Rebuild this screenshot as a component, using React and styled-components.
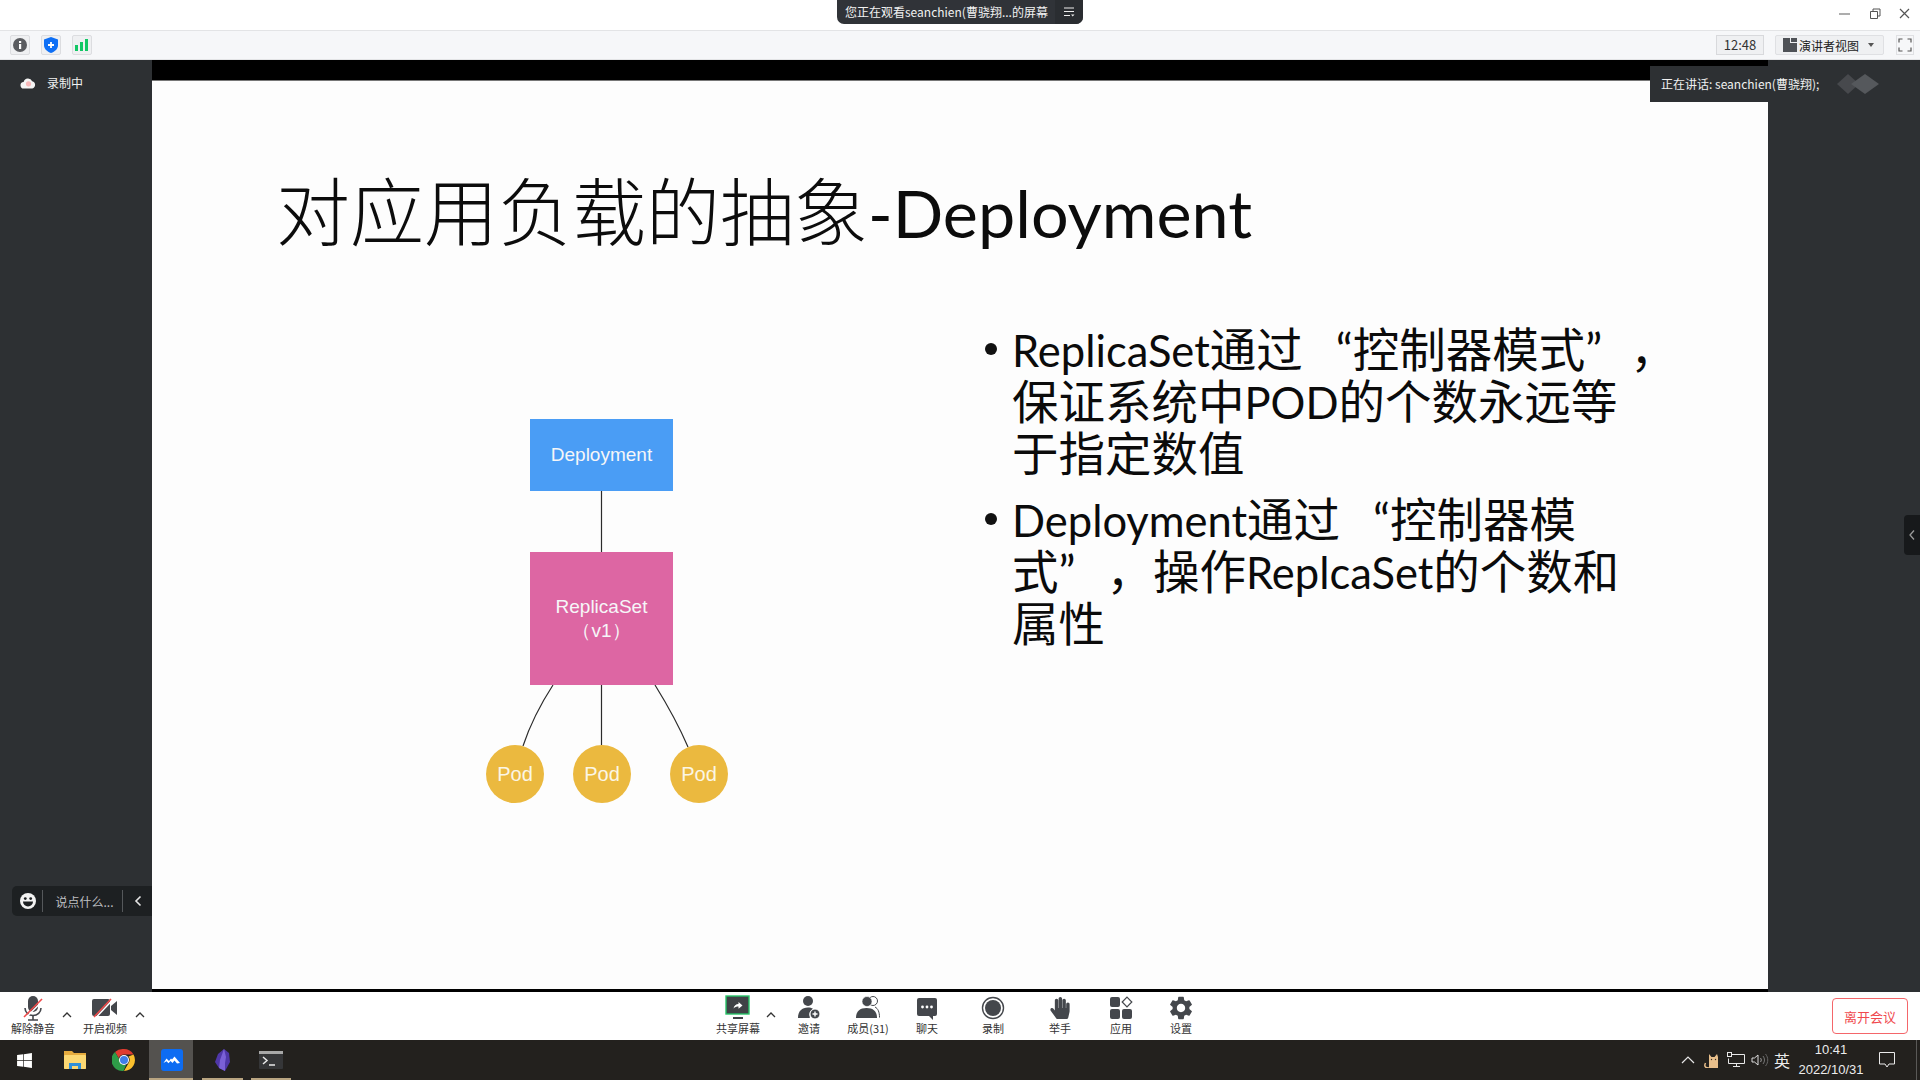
import React from 'react'
import styled, { createGlobalStyle } from 'styled-components'
import { FaHandPaper, FaWindows } from 'react-icons/fa'
import { MdSettings } from 'react-icons/md'

const UI_FONT = `"Noto Sans CJK SC", "Liberation Sans", sans-serif`
const SLIDE_FONT = `Lato, "Noto Sans CJK SC", sans-serif`
const ICON_GRAY = '#44474c'

const GlobalStyle = createGlobalStyle`
  html, body {
    margin: 0;
    padding: 0;
    background: #fff;
    overflow: hidden;
  }
  * {
    box-sizing: border-box;
  }
`

const Page = styled.div`
  width: 1920px;
  height: 1080px;
  display: flex;
  flex-direction: column;
  position: relative;
  overflow: hidden;
  font-family: ${UI_FONT};
`

/* title bar */
const TitleBar = styled.div`
  height: 31px;
  flex: none;
  background: #fff;
  border-bottom: 1px solid #e3e4e6;
  display: flex;
  justify-content: flex-end;
  align-items: center;
  padding: 0 0 2px 0;
`

const WindowButton = styled.div`
  width: 30px;
  height: 24px;
  display: flex;
  align-items: center;
  justify-content: center;
`

const ViewingBanner = styled.div`
  position: absolute;
  top: 0;
  left: 837px;
  width: 246px;
  height: 24px;
  display: flex;
  background: #303338;
  color: #f1f1f1;
  font-size: 12px;
  border-radius: 0 0 7px 7px;
  overflow: hidden;
`

const BannerText = styled.div`
  flex: 1;
  padding-left: 8px;
  line-height: 24px;
  white-space: nowrap;
`

const BannerMenu = styled.div`
  width: 28px;
  background: #2a2d31;
  display: flex;
  align-items: center;
  justify-content: center;
`

/* meeting info bar */
const InfoBar = styled.div`
  height: 29px;
  flex: none;
  background: #f6f7f9;
  border-bottom: 1px solid #e3e4e6;
  display: flex;
  align-items: center;
  padding: 0 6px 0 10px;
`

const InfoIcon = styled.div`
  width: 20px;
  height: 20px;
  margin-right: 11px;
  border: 1px solid #dcdde0;
  border-radius: 2px;
  background: #eff0f2;
  display: flex;
  align-items: center;
  justify-content: center;
`

const Timer = styled.div`
  margin-left: auto;
  width: 48px;
  height: 20px;
  border: 1px solid #d8d9dc;
  background: #eff0f2;
  font-size: 13px;
  color: #333;
  text-align: center;
  line-height: 18px;
`

const ViewButton = styled.div`
  width: 109px;
  height: 20px;
  margin-left: 11px;
  border: 1px solid #dfe0e3;
  border-radius: 2px;
  background: #eff0f2;
  font-size: 12px;
  color: #222;
  display: flex;
  align-items: center;
  padding: 0 7px;
  gap: 2px;
`

const Caret = styled.span`
  margin-left: auto;
  margin-right: 2px;
  border-left: 3.5px solid transparent;
  border-right: 3.5px solid transparent;
  border-top: 4px solid #555;
`

const FullscreenButton = styled.div`
  width: 18px;
  height: 20px;
  margin-left: 12px;
  border: 1px solid #dfe0e3;
  display: flex;
  align-items: center;
  justify-content: center;
`

/* stage */
const Stage = styled.div`
  flex: 1;
  min-height: 0;
  display: flex;
  background: #2d3033;
`

const LeftRail = styled.div`
  width: 152px;
  flex: none;
  display: flex;
  flex-direction: column;
  padding: 14px 0 76px 12px;
`

const RightRail = styled.div`
  width: 152px;
  flex: none;
  display: flex;
  align-items: center;
  justify-content: flex-end;
  padding-top: 18px;
`

const RecordingBadge = styled.div`
  display: flex;
  align-items: center;
  gap: 11px;
  padding-left: 8px;
  font-size: 12px;
  color: #f0f0f0;
`

const ChatPill = styled.div`
  margin-top: auto;
  height: 30px;
  background: #1d2022;
  border-radius: 5px 0 0 5px;
  display: flex;
  align-items: center;
  color: #bdbfc1;
  font-size: 12px;
`

const PillCell = styled.div`
  height: 22px;
  display: flex;
  align-items: center;
  justify-content: center;
  width: ${p => p.$w}px;
  padding-left: ${p => p.$inset || 0}px;
  border-right: ${p => (p.$divider ? '1px solid #55585b' : 'none')};
`

const SideHandle = styled.div`
  width: 16px;
  height: 40px;
  background: #17191b;
  border-radius: 4px 0 0 4px;
  display: flex;
  align-items: center;
  justify-content: center;
`

const SlideColumn = styled.div`
  flex: 1;
  display: flex;
  flex-direction: column;
  background: #000;
  padding: 20px 0 3px;
`

const Slide = styled.div`
  flex: 1;
  background: #fdfdfd;
  border-top: 1px solid #777;
  display: flex;
  flex-direction: column;
  color: #111;
  font-family: ${SLIDE_FONT};
`

const SlideTitle = styled.div`
  height: 244px;
  flex: none;
  padding: 88px 0 0 124px;
  font-size: 74px;
  line-height: 86px;
  font-weight: 300;
  white-space: nowrap;
  color: #0c0c0c;
`

const TitleLatin = styled.span`
  font-size: 66.5px;
  font-weight: 400;
  vertical-align: 2px;
  line-height: 1;
`

const SlideBody = styled.div`
  display: grid;
  grid-template-columns: 833px 1fr;
`

const Diagram = styled.div`
  position: relative;
  margin: 94px 0 0 334px;
  width: 243px;
  height: 384px;
`

const Connectors = styled.svg`
  position: absolute;
  inset: 0;
`

const DiagramBox = styled.div`
  position: absolute;
  left: 44px;
  top: ${p => p.$top}px;
  width: 143px;
  height: ${p => p.$height}px;
  background: ${p => p.$color};
  color: #f6f6f8;
  font-family: "Liberation Sans", sans-serif;
  font-size: 19px;
  line-height: 24px;
  display: flex;
  flex-direction: column;
  align-items: center;
  justify-content: center;
`

const PodCircle = styled.div`
  position: absolute;
  top: 326px;
  left: ${p => p.$left}px;
  width: 58px;
  height: 58px;
  border-radius: 50%;
  background: #ebb93f;
  color: #fbf6e6;
  font-family: "Liberation Sans", sans-serif;
  font-size: 20px;
  display: flex;
  align-items: center;
  justify-content: center;
`

const Bullets = styled.div`
  margin-top: -2px;
  font-size: 46.5px;
  line-height: 52px;
  color: #0b0b0b;
`

const BulletItem = styled.div`
  position: relative;
  padding-left: 27px;
  margin-bottom: 14px;
  white-space: pre;

  &::before {
    content: '';
    position: absolute;
    left: 0;
    top: 20px;
    width: 12px;
    height: 12px;
    border-radius: 50%;
    background: #111;
  }
`

const BulletLine = styled.div`
  height: 52px;
`

const Latin = styled.span`
  font-size: 43.5px;
`

const QuoteGap = styled.span`
  display: inline-block;
  width: ${p => p.$w}px;
`

const SpeakingBanner = styled.div`
  position: absolute;
  top: 66px;
  left: 1650px;
  width: 270px;
  height: 36px;
  background: #2d3033;
  color: #f0f0f0;
  font-size: 12px;
  line-height: 36px;
  padding-left: 11px;
  display: flex;
`

const SpeakingLogo = styled.svg`
  margin: 8px 0 0 18px;
`

/* bottom toolbar */
const Toolbar = styled.div`
  height: 48px;
  flex: none;
  background: #fff;
  display: flex;
  align-items: stretch;
  padding: 0 12px 0 8px;
`

const ToolGroup = styled.div`
  display: flex;
  margin-left: ${p => p.$offset || 0}px;
`

const ToolItem = styled.div`
  width: ${p => p.$w}px;
  display: flex;
  flex-direction: column;
  align-items: center;
  padding-top: 3px;
  color: #333;
  font-size: 11px;
  line-height: 14px;
  white-space: nowrap;
`

const ToolIcon = styled.div`
  height: 26px;
  display: flex;
  align-items: center;
  justify-content: center;
  color: ${ICON_GRAY};
`

const ToolChevron = styled.div`
  width: ${p => p.$w}px;
  padding-top: 20px;
  display: flex;
  justify-content: center;
`

const LeaveButton = styled.div`
  margin: 6px 0 6px auto;
  width: 76px;
  border: 1px solid #f4666a;
  border-radius: 4px;
  color: #f0494e;
  font-size: 13px;
  display: flex;
  align-items: center;
  justify-content: center;
`

/* windows taskbar */
const Taskbar = styled.div`
  height: 40px;
  flex: none;
  background: #23211e;
  display: flex;
  align-items: stretch;
  color: #ececec;
`

const TaskItem = styled.div`
  position: relative;
  width: ${p => p.$w}px;
  margin-left: ${p => p.$gap || 0}px;
  padding-left: ${p => (p.$active ? 2 : 0)}px;
  display: flex;
  align-items: center;
  justify-content: center;
  background: ${p => (p.$active ? '#54524f' : 'transparent')};

  &::after {
    content: '';
    display: ${p => (p.$open ? 'block' : 'none')};
    position: absolute;
    bottom: 0;
    left: ${p => (p.$active ? 0 : 4)}px;
    right: ${p => (p.$active ? 0 : 4)}px;
    height: 2px;
    background: #b9a581;
  }
`

const Tray = styled.div`
  margin-left: auto;
  display: flex;
  align-items: center;
`

const TrayItem = styled.div`
  width: ${p => p.$w}px;
  display: flex;
  align-items: center;
  justify-content: center;
  font-size: ${p => p.$size || 14}px;
`

const Clock = styled.div`
  width: 78px;
  text-align: center;
  font-size: 13px;
  line-height: 20px;
  font-family: "Liberation Sans", sans-serif;
`

const ShowDesktop = styled.div`
  width: 1px;
  height: 40px;
  margin: 0 3px 0 12px;
  background: #5a5957;
`

/* icons */
const Glyph = ({ size = 24, h, children }) => (
  <svg width={size} height={h || size} viewBox={`0 0 ${size} ${h || size}`} fill="none">
    {children}
  </svg>
)

const Slash = ({ x1, y1, x2, y2 }) => (
  <>
    <line x1={x1 + 1.5} y1={y1 + 1} x2={x2 + 1.5} y2={y2 + 1} stroke="#fff" strokeWidth="1.5" />
    <line x1={x1} y1={y1} x2={x2} y2={y2} stroke="#f04a4a" strokeWidth="1.6" />
  </>
)

const MicOff = () => (
  <Glyph size={24} h={26}>
    <rect x="7" y="1" width="10" height="16" rx="5" fill={ICON_GRAY} />
    <path d="M4 13a8 7.5 0 0 0 16 0" stroke={ICON_GRAY} strokeWidth="1.6" />
    <path d="M12 20.5V25M7 25h10" stroke={ICON_GRAY} strokeWidth="1.6" />
    <Slash x1={3} y1={22} x2={21} y2={4} />
  </Glyph>
)

const VideoOff = () => (
  <Glyph size={26} h={26}>
    <rect x="0" y="4" width="18" height="17" rx="2" fill={ICON_GRAY} />
    <path d="M19 11l6-5v14l-6-5z" fill={ICON_GRAY} />
    <Slash x1={2} y1={22} x2={19} y2={4} />
  </Glyph>
)

const ShareScreen = () => (
  <Glyph size={26} h={26}>
    <rect x="1" y="1" width="23" height="18" fill="#3f4246" stroke="#28c469" strokeWidth="1.4" />
    <path d="M8.5 13.5c.6-3 2.5-4.2 5-4.4V7l4 3.4-4 3.3v-2.1c-2 0-3.600.5-5 1.900z" fill="#fff" />
    <rect x="8" y="22" width="10" height="2" fill="#3f4246" />
  </Glyph>
)

const Invite = () => (
  <Glyph size={26} h={26}>
    <circle cx="12" cy="6" r="5" fill={ICON_GRAY} />
    <path d="M2 23c0-7 4-10.500 10-10.500 2 0 3.500.4 5 1.200a7 7 0 0 0-3 9.300z" fill={ICON_GRAY} />
    <circle cx="19" cy="19" r="5" fill={ICON_GRAY} stroke="#fff" strokeWidth="1" />
    <path d="M19 16.500v5M16.500 19h5" stroke="#fff" strokeWidth="1.4" />
  </Glyph>
)

const Members = () => (
  <Glyph size={26} h={26}>
    <circle cx="18" cy="6" r="4.500" stroke={ICON_GRAY} strokeWidth="1" />
    <path d="M20 12c3 1.500 4.500 5 4.500 10.500" stroke={ICON_GRAY} strokeWidth="1" />
    <circle cx="12" cy="6.500" r="5" fill={ICON_GRAY} stroke="#fff" strokeWidth=".6" />
    <path d="M1 23c0-7 4-10 10.500-10S22 16 22 23z" fill={ICON_GRAY} />
  </Glyph>
)

const Chat = () => (
  <Glyph size={22} h={26}>
    <path d="M3 3h16a2 2 0 0 1 2 2v14a2 2 0 0 1-2 2h-2v4l-4-4H3a2 2 0 0 1-2-2V5a2 2 0 0 1 2-2z" fill={ICON_GRAY} />
    <circle cx="6.500" cy="12" r="1.400" fill="#fff" />
    <circle cx="11" cy="12" r="1.400" fill="#fff" />
    <circle cx="15.500" cy="12" r="1.400" fill="#fff" />
  </Glyph>
)

const Record = () => (
  <Glyph size={24} h={24}>
    <circle cx="12" cy="12" r="10.500" stroke={ICON_GRAY} strokeWidth="1.4" />
    <circle cx="12" cy="12" r="8" fill={ICON_GRAY} />
  </Glyph>
)

const Apps = () => (
  <Glyph size={24} h={24}>
    <rect x="1" y="1" width="10" height="10" rx="2" fill={ICON_GRAY} />
    <rect x="1" y="13" width="10" height="10" rx="2" fill={ICON_GRAY} />
    <rect x="13" y="13" width="10" height="10" rx="2" fill={ICON_GRAY} />
    <path d="M18 1.200L22.800 6 18 10.800 13.200 6z" stroke={ICON_GRAY} strokeWidth="1.2" />
  </Glyph>
)

const Chevron = () => (
  <svg width="10" height="6" viewBox="0 0 10 6" fill="none">
    <path d="M1 5l4-4 4 4" stroke="#333" strokeWidth="1.3" />
  </svg>
)

const Cloud = () => (
  <Glyph size={16} h={12}>
    <path d="M4 11.500a3.300 3.300 0 0 1-.4-6.600 4.600 4.600 0 0 1 8.600-.6 3.700 3.700 0 0 1 .1 7.200z" fill="#f5f5f5" />
    <circle cx="8.500" cy="6.800" r="2.600" fill="#f8b9ba" />
  </Glyph>
)

const Smile = () => (
  <Glyph size={16}>
    <circle cx="8" cy="8" r="8" fill="#f3f3f3" />
    <circle cx="5.300" cy="5.600" r="1.400" fill="#1d2022" />
    <circle cx="10.700" cy="5.600" r="1.400" fill="#1d2022" />
    <path d="M3 8.500h10a5 5 0 0 1-10 0z" fill="#1d2022" />
  </Glyph>
)

const ChromeIcon = () => (
  <svg width="24" height="24" viewBox="0 0 48 48">
    <path d="M24 2a22 22 0 0 1 19 11H24a11 11 0 0 0-10.500 7.500L6 8a22 22 0 0 1 18-6z" fill="#de3c30" />
    <path d="M43 13a22 22 0 0 1-19 33l9.500-16.500A11 11 0 0 0 33 17z" fill="#fbc02d" />
    <path d="M6 8l10 17a11 11 0 0 0 12 9l-5 12A22 22 0 0 1 6 8z" fill="#2e9c48" />
    <circle cx="24" cy="24" r="10" fill="#fff" />
    <circle cx="24" cy="24" r="8" fill="#3f7ee8" />
  </svg>
)

const Folder = () => (
  <svg width="22" height="20" viewBox="0 0 22 20">
    <path d="M0 1h8l2 2h12v15a1 1 0 0 1-1 1H1a1 1 0 0 1-1-1z" fill="#e5ab3e" />
    <rect x="0" y="5" width="22" height="14" rx="1" fill="#fbd873" />
    <path d="M5 19v-6h12v6h-3v-3H8v3z" fill="#2f8fd8" />
  </svg>
)

const MeetingApp = () => (
  <svg width="22" height="22" viewBox="0 0 22 22">
    <rect width="22" height="22" rx="3" fill="#0d6cf2" />
    <path d="M2.500 14l3-4.500 2.500 2.500 2-2.500 1 1 2.500-3 5.500 6.500-3 .5-2.500-3-2 2.500-2-2-2 2.200-2-2z" fill="#fff" />
  </svg>
)

const Gem = () => (
  <svg width="18" height="22" viewBox="0 0 18 22">
    <path d="M10 0l5 4 1 9-5 9-6-3-4-6 3-8z" fill="#4f37a8" />
    <path d="M10 0l2 8-1 6 0 8-6-3 1-8z" fill="#7a60d6" />
  </svg>
)

const TerminalApp = () => (
  <svg width="24" height="20" viewBox="0 0 24 20">
    <rect width="24" height="18" y="1" rx="1" fill="#353638" />
    <rect width="24" height="3" y="1" fill="#a8a8a8" />
    <path d="M4 7l4 3.500-4 3.500" stroke="#e8e8e8" strokeWidth="1.500" fill="none" />
    <path d="M10 15h6" stroke="#e8e8e8" strokeWidth="1.500" />
  </svg>
)

const CatIcon = () => (
  <svg width="17" height="16" viewBox="0 0 17 16">
    <path d="M5 16V2l2.500 3h3L13 2l1 3v11z" fill="#e8bf8b" />
    <path d="M5 16C1 16 0 14 1.500 11" stroke="#e8bf8b" strokeWidth="1.500" fill="none" />
    <circle cx="7.500" cy="7.500" r=".7" fill="#3a3027" />
    <circle cx="11.500" cy="7.500" r=".7" fill="#3a3027" />
  </svg>
)

const NetworkIcon = () => (
  <svg width="18" height="16" viewBox="0 0 18 16" fill="none" stroke="#e8e8e8">
    <path d="M4.500 2.500H17.500V11.500H1.500V6.500" />
    <rect x="0.500" y="0.500" width="4" height="4" />
    <path d="M9.500 11.500v3M6 14.500h7" />
  </svg>
)

const VolumeIcon = () => (
  <svg width="18" height="14" viewBox="0 0 18 14" fill="none" stroke="#dddddd">
    <path d="M1 5h2.500L7 2v10L3.500 9H1z" />
    <path d="M9.500 5c1 1.300 1 2.700 0 4" stroke="#9a9a9a" />
    <path d="M12 3c2 2.500 2 5.500 0 8" stroke="#777" />
    <path d="M14.500 1c3 3.500 3 8.500 0 12" stroke="#666" />
  </svg>
)

const WindowControl = ({ d }) => (
  <svg width="14" height="14" viewBox="0 0 14 14" fill="none">
    {d}
  </svg>
)

const toolsCenter = [
  { w: 66, label: '邀请', icon: <Invite /> },
  { w: 52, label: '成员(31)', icon: <Members /> },
  { w: 66, label: '聊天', icon: <Chat /> },
  { w: 66, label: '录制', icon: <Record /> },
  { w: 68, label: '举手', icon: <FaHandPaper size={22} /> },
  { w: 54, label: '应用', icon: <Apps /> },
  { w: 66, label: '设置', icon: <MdSettings size={28} /> },
]

const App = () => (
  <Page>
    <GlobalStyle />

    <TitleBar>
      <WindowButton>
        <WindowControl d={<path d="M1 7h11" stroke="#777" strokeWidth="1.2" />} />
      </WindowButton>
      <WindowButton>
        <WindowControl d={<path d="M2.500 4.500h7v7h-7zM5 4.500V2h7v7h-2.500" stroke="#555" />} />
      </WindowButton>
      <WindowButton>
        <WindowControl d={<path d="M2 2l9 9M11 2l-9 9" stroke="#555" strokeWidth="1.2" />} />
      </WindowButton>
    </TitleBar>

    <ViewingBanner>
      <BannerText>您正在观看seanchien(曹骁翔...的屏幕</BannerText>
      <BannerMenu>
        <svg width="12" height="10" viewBox="0 0 12 10" fill="none">
          <path d="M1 1h10M1 4.500h10M1 8.500h6" stroke="#eee" />
          <path d="M8 7.500h3.500L9.750 9.500z" fill="#eee" />
        </svg>
      </BannerMenu>
    </ViewingBanner>

    <InfoBar>
      <InfoIcon>
        <svg width="14" height="14" viewBox="0 0 14 14">
          <circle cx="7" cy="7" r="7" fill="#5a5c60" />
          <rect x="6" y="6" width="2.200" height="5" fill="#fff" />
          <rect x="6" y="3" width="2.200" height="2" fill="#fff" />
        </svg>
      </InfoIcon>
      <InfoIcon>
        <svg width="14" height="16" viewBox="0 0 14 16">
          <path d="M7 0l7 2.500V8c0 4-3 6.500-7 8-4-1.500-7-4-7-8V2.500z" fill="#0e6ff5" />
          <path d="M7 5v6M4 8h6" stroke="#fff" strokeWidth="1.800" />
        </svg>
      </InfoIcon>
      <InfoIcon>
        <svg width="14" height="12" viewBox="0 0 14 12">
          <rect x="0" y="6" width="3" height="6" fill="#12c765" />
          <rect x="5" y="3" width="3" height="9" fill="#12c765" />
          <rect x="10" y="0" width="3" height="12" fill="#12c765" />
        </svg>
      </InfoIcon>
      <Timer>12:48</Timer>
      <ViewButton>
        <svg width="14" height="14" viewBox="0 0 14 14">
          <path d="M0 0h7v5h7v9H0z" fill="#4f5257" />
          <rect x="8" y="0" width="6" height="4" fill="#4f5257" />
        </svg>
        演讲者视图
        <Caret />
      </ViewButton>
      <FullscreenButton>
        <svg width="14" height="14" viewBox="0 0 14 14" fill="none" stroke="#555" strokeWidth="1.200">
          <path d="M1 4.500V1h3.500M9.500 1H13v3.500M13 9.500V13H9.500M4.500 13H1V9.500" />
        </svg>
      </FullscreenButton>
    </InfoBar>

    <Stage>
      <LeftRail>
        <RecordingBadge>
          <Cloud />
          录制中
        </RecordingBadge>
        <ChatPill>
          <PillCell $w={31} $divider $inset={2}><Smile /></PillCell>
          <PillCell $w={80} $divider $inset={4}>说点什么...</PillCell>
          <PillCell $w={29}>
            <svg width="8" height="12" viewBox="0 0 8 12" fill="none">
              <path d="M6.500 1.500L2 6l4.500 4.500" stroke="#e5e5e5" strokeWidth="1.600" />
            </svg>
          </PillCell>
        </ChatPill>
      </LeftRail>

      <SlideColumn>
        <Slide>
          <SlideTitle>对应用负载的抽象<TitleLatin>-Deployment</TitleLatin></SlideTitle>
          <SlideBody>
            <Diagram>
              <Connectors width="243" height="384" viewBox="0 0 243 384" fill="none" stroke="#2b2b2b" strokeWidth="1.200">
                <path d="M115.500 72v61M115.500 266v60" />
                <path d="M67 266C54 286 45 303 37 327" />
                <path d="M169 266C182 287 193 307 202 328" />
              </Connectors>
              <DiagramBox $top={0} $height={72} $color="#4a9df5">Deployment</DiagramBox>
              <DiagramBox $top={133} $height={133} $color="#dd66a3">
                <div>ReplicaSet</div>
                <div>（v1）</div>
              </DiagramBox>
              <PodCircle $left={0}>Pod</PodCircle>
              <PodCircle $left={87}>Pod</PodCircle>
              <PodCircle $left={184}>Pod</PodCircle>
            </Diagram>
            <Bullets>
              <BulletItem>
                <BulletLine><Latin>ReplicaSet</Latin>通过<QuoteGap $w={33} />“控制器模式”<QuoteGap $w={28} />，</BulletLine>
                <BulletLine>保证系统中<Latin>POD</Latin>的个数永远等</BulletLine>
                <BulletLine>于指定数值</BulletLine>
              </BulletItem>
              <BulletItem>
                <BulletLine><Latin>Deployment</Latin>通过<QuoteGap $w={33} />“控制器模</BulletLine>
                <BulletLine>式”<QuoteGap $w={31} />，操作<Latin>ReplcaSet</Latin>的个数和</BulletLine>
                <BulletLine>属性</BulletLine>
              </BulletItem>
            </Bullets>
          </SlideBody>
        </Slide>
      </SlideColumn>

      <RightRail>
        <SideHandle>
          <svg width="8" height="12" viewBox="0 0 8 12" fill="none">
            <path d="M6 1.500L2 6l4 4.500" stroke="#9a9a9a" strokeWidth="1.300" />
          </svg>
        </SideHandle>
      </RightRail>
    </Stage>

    <SpeakingBanner>
      正在讲话: seanchien(曹骁翔);
      <SpeakingLogo width="44" height="20" viewBox="0 0 44 20">
        <path d="M0 10l11-10 11 10-11 10z" fill="#47494d" />
        <path d="M14 10l14-10 14 10-14 10z" fill="#55585c" />
      </SpeakingLogo>
    </SpeakingBanner>

    <Toolbar>
      <ToolGroup>
        <ToolItem $w={50}>
          <ToolIcon><MicOff /></ToolIcon>
          解除静音
        </ToolItem>
        <ToolChevron $w={18}><Chevron /></ToolChevron>
        <ToolItem $w={58}>
          <ToolIcon><VideoOff /></ToolIcon>
          开启视频
        </ToolItem>
        <ToolChevron $w={12}><Chevron /></ToolChevron>
      </ToolGroup>

      <ToolGroup $offset={564}>
        <ToolItem $w={56}>
          <ToolIcon><ShareScreen /></ToolIcon>
          共享屏幕
        </ToolItem>
        <ToolChevron $w={10}><Chevron /></ToolChevron>
        {toolsCenter.map(tool => (
          <ToolItem key={tool.label} $w={tool.w}>
            <ToolIcon>{tool.icon}</ToolIcon>
            {tool.label}
          </ToolItem>
        ))}
      </ToolGroup>

      <LeaveButton>离开会议</LeaveButton>
    </Toolbar>

    <Taskbar>
      <TaskItem $w={48}><FaWindows size={17} color="#fff" /></TaskItem>
      <TaskItem $w={54}><Folder /></TaskItem>
      <TaskItem $w={44}><ChromeIcon /></TaskItem>
      <TaskItem $w={44} $gap={3} $active $open><MeetingApp /></TaskItem>
      <TaskItem $w={49} $gap={5} $open><Gem /></TaskItem>
      <TaskItem $w={48} $open><TerminalApp /></TaskItem>
      <Tray>
        <TrayItem $w={24}>
          <svg width="14" height="8" viewBox="0 0 14 8" fill="none">
            <path d="M1 7l6-6 6 6" stroke="#e8e8e8" strokeWidth="1.200" />
          </svg>
        </TrayItem>
        <TrayItem $w={24}><CatIcon /></TrayItem>
        <TrayItem $w={24}><NetworkIcon /></TrayItem>
        <TrayItem $w={24}><VolumeIcon /></TrayItem>
        <TrayItem $w={20} $size={16}>英</TrayItem>
        <Clock>
          <div>10:41</div>
          <div>2022/10/31</div>
        </Clock>
        <TrayItem $w={34}>
          <svg width="16" height="16" viewBox="0 0 16 16" fill="none">
            <path d="M.5 .5h15v11.500H10l-2 3-2-3H.5z" stroke="#eaeaea" />
          </svg>
        </TrayItem>
        <ShowDesktop />
      </Tray>
    </Taskbar>
  </Page>
)

export default App
